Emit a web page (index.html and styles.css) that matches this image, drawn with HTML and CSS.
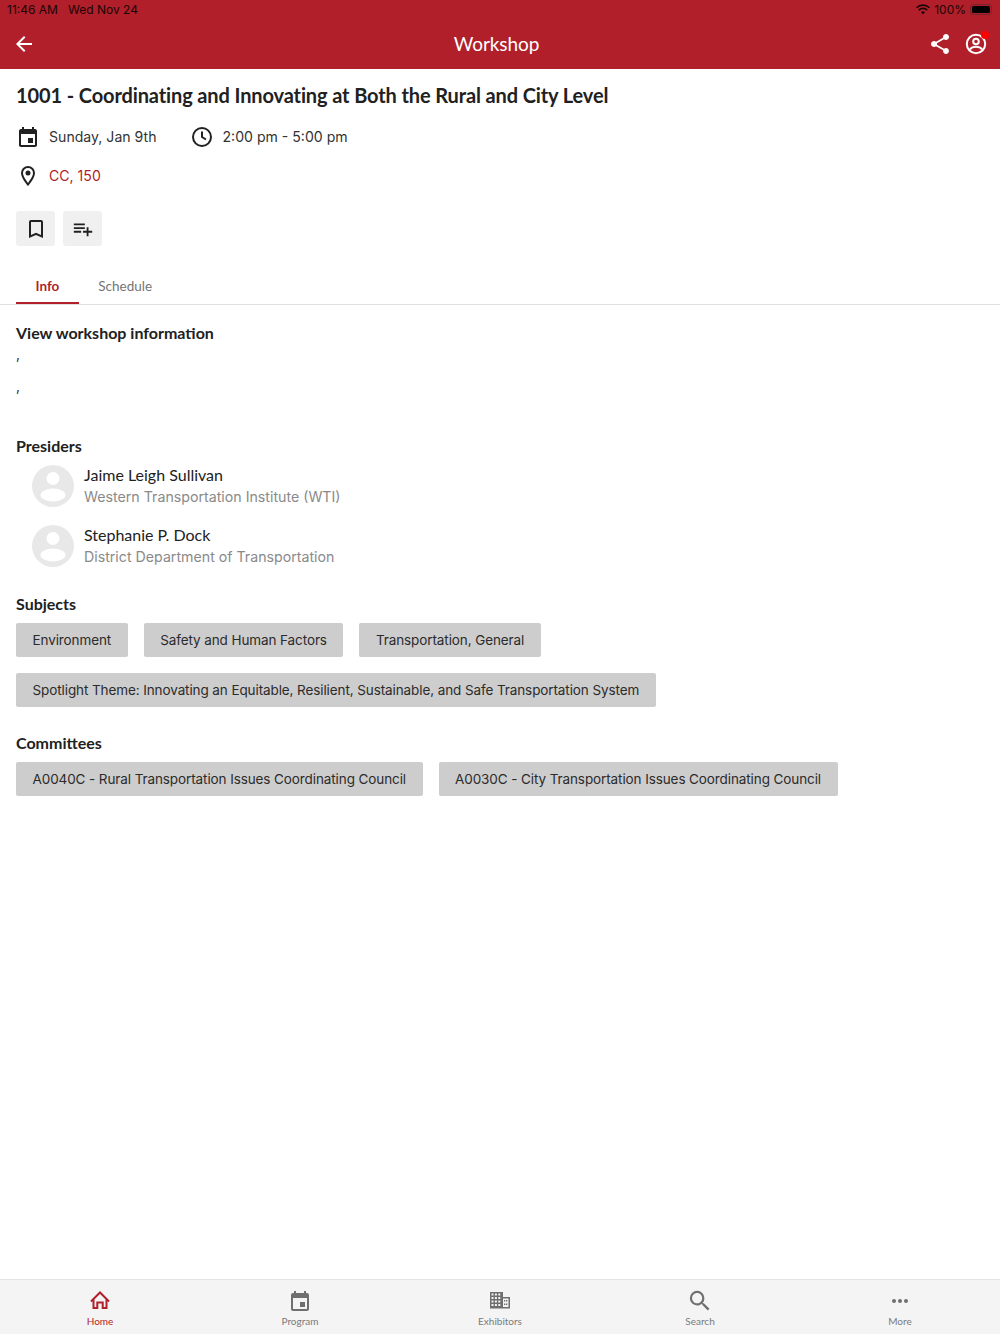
FILE: index.html
```html
<!DOCTYPE html>
<html lang="en">
<head>
<meta charset="utf-8">
<title>Workshop</title>
<link rel="stylesheet" href="styles.css">
</head>
<body>
<div class="app">
  <header class="topbar">
    <div class="status">
      <span class="status-time">11:46 AM&nbsp;&nbsp; Wed Nov 24</span>
      <span class="status-right">
        <svg class="wifi" width="14" height="11" viewBox="0 0 16 12"><path d="M8 11.5 5.7 9.1a3.3 3.3 0 0 1 4.6 0zM3.9 7.4 2.6 6a7.7 7.7 0 0 1 10.8 0l-1.3 1.4a5.8 5.8 0 0 0-8.200 0zM1.300 4.700 0 3.300a11.400 11.400 0 0 1 16 0l-1.300 1.400a9.500 9.500 0 0 0-13.400 0z" fill="#1a0505"/></svg>
        <span>100%</span>
        <span class="battery"><span class="battery-fill"></span></span>
      </span>
    </div>
    <div class="navrow">
      <svg class="back" width="24" height="24" viewBox="0 0 24 24"><path d="M20 11H7.830l5.590-5.590L12 4l-8 8 8 8 1.410-1.410L7.830 13H20z" fill="#fff"/></svg>
      <div class="navtitle">Workshop</div>
      <div class="navactions">
        <svg width="24" height="24" viewBox="0 0 24 24"><path d="M18 16.080c-.76 0-1.440.3-1.960.77L8.910 12.700c.05-.23.090-.46.090-.7s-.04-.47-.09-.7l7.050-4.110c.54.500 1.250.810 2.040.810 1.660 0 3-1.340 3-3s-1.340-3-3-3-3 1.340-3 3c0 .24.040.47.090.7L8.040 9.810C7.500 9.310 6.790 9 6 9c-1.660 0-3 1.340-3 3s1.340 3 3 3c.79 0 1.500-.31 2.040-.81l7.120 4.160c-.05.210-.08.430-.08.650 0 1.610 1.310 2.920 2.920 2.920s2.920-1.310 2.920-2.920-1.310-2.920-2.920-2.920z" fill="#fff"/></svg>
        <span class="account">
          <svg width="24" height="24" viewBox="0 0 24 24" fill="none" stroke="#fff" stroke-width="2"><circle cx="12" cy="12" r="9.200"/><circle cx="12" cy="9.500" r="2.800"/><path d="M5.800 17.500c1.500-2 3.800-2.800 6.200-2.800s4.700.8 6.200 2.800"/></svg>
          <span class="dot"></span>
        </span>
      </div>
    </div>
  </header>

  <main class="content">
    <div class="summary">
      <h1 class="title">1001 - Coordinating and Innovating at Both the Rural and City Level</h1>
      <div class="meta">
        <span class="meta-item">
          <svg class="meta-icon" width="24" height="24" viewBox="0 0 24 24"><path d="M17 13h-5v5h5v-5zM16 2v2H8V2H6v2H5c-1.110 0-1.990.9-1.990 2L3 20c0 1.100.89 2 2 2h14c1.100 0 2-.9 2-2V6c0-1.100-.9-2-2-2h-1V2h-2zm3 18H5V9h14v11z" fill="#212121"/></svg>
          Sunday, Jan 9th
        </span>
        <span class="meta-item">
          <svg class="meta-icon" width="24" height="24" viewBox="0 0 24 24" fill="none" stroke="#212121" stroke-width="2"><circle cx="12" cy="12" r="9"/><path d="M12 6.500V12l4 2.500"/></svg>
          2:00 pm - 5:00 pm
        </span>
      </div>
      <div class="meta">
        <a class="meta-item location">
          <svg class="meta-icon" width="24" height="24" viewBox="0 0 24 24"><path d="M12 2a7 7 0 0 0-7 7c0 5.250 7 13 7 13s7-7.750 7-13a7 7 0 0 0-7-7zM7 9a5 5 0 0 1 10 0c0 2.880-2.880 7.190-5 9.880C9.920 16.210 7 11.850 7 9z" fill="#212121"/><circle cx="12" cy="9" r="2.500" fill="#212121"/></svg>
          CC, 150
        </a>
      </div>
      <div class="actions">
        <button class="action" aria-label="Bookmark">
          <svg width="24" height="24" viewBox="0 0 24 24"><path d="M17 3H7c-1.100 0-2 .9-2 2v16l7-3 7 3V5c0-1.100-.9-2-2-2zm0 15-5-2.180L7 18V5h10v13z" fill="#212121"/></svg>
        </button>
        <button class="action" aria-label="Add to list">
          <svg width="22" height="22" viewBox="0 0 24 24"><path d="M14 10H2v2h12v-2zm0-4H2v2h12V6zm4 8v-4h-2v4h-4v2h4v4h2v-4h4v-2h-4zM2 16h8v-2H2v2z" fill="#212121"/></svg>
        </button>
      </div>
    </div>

    <nav class="tabs">
      <span class="tab tab-active">Info</span>
      <span class="tab">Schedule</span>
    </nav>

    <section class="details">
      <h2 class="section-title">View workshop information</h2>
      <p class="comma">,</p>
      <p class="comma">,</p>

      <h2 class="section-title presiders-title">Presiders</h2>
      <div class="person">
        <svg class="avatar" width="42" height="42" viewBox="0 0 42 42"><circle cx="21" cy="21" r="21" fill="#e8e8e8"/><circle cx="21" cy="13.500" r="6.500" fill="#fff"/><ellipse cx="21" cy="30" rx="12.500" ry="6.500" fill="#fff"/></svg>
        <div class="person-text">
          <div class="person-name">Jaime Leigh Sullivan</div>
          <div class="person-org">Western Transportation Institute (WTI)</div>
        </div>
      </div>
      <div class="person">
        <svg class="avatar" width="42" height="42" viewBox="0 0 42 42"><circle cx="21" cy="21" r="21" fill="#e8e8e8"/><circle cx="21" cy="13.500" r="6.500" fill="#fff"/><ellipse cx="21" cy="30" rx="12.500" ry="6.500" fill="#fff"/></svg>
        <div class="person-text">
          <div class="person-name">Stephanie P. Dock</div>
          <div class="person-org">District Department of Transportation</div>
        </div>
      </div>

      <h2 class="section-title subjects-title">Subjects</h2>
      <div class="chips">
        <span class="chip">Environment</span>
        <span class="chip">Safety and Human Factors</span>
        <span class="chip">Transportation, General</span>
        <span class="chip">Spotlight Theme: Innovating an Equitable, Resilient, Sustainable, and Safe Transportation System</span>
      </div>

      <h2 class="section-title committees-title">Committees</h2>
      <div class="chips">
        <span class="chip">A0040C - Rural Transportation Issues Coordinating Council</span>
        <span class="chip">A0030C - City Transportation Issues Coordinating Council</span>
      </div>
    </section>
  </main>

  <footer class="bottomnav">
    <div class="navitem navitem-active">
      <svg width="24" height="24" viewBox="0 0 24 24" fill="none" stroke="#b01f2a" stroke-width="2"><path d="M3 12.500 12 3.500l9 9"/><path d="M5.500 10.500V19h3.800v-5.500h5.400V19h3.800V10.500"/></svg>
      <span>Home</span>
    </div>
    <div class="navitem">
      <svg width="24" height="24" viewBox="0 0 24 24"><path d="M17 13h-5v5h5v-5zM16 2v2H8V2H6v2H5c-1.110 0-1.990.9-1.990 2L3 20c0 1.100.89 2 2 2h14c1.100 0 2-.9 2-2V6c0-1.100-.9-2-2-2h-1V2h-2zm3 18H5V9h14v11z" fill="#6f6f6f"/></svg>
      <span>Program</span>
    </div>
    <div class="navitem">
      <svg width="24" height="24" viewBox="0 0 24 24"><path d="M2 3h13v5h7v11.500H2zM3.500 4.500v2h2v-2zm3.400 0v2h2v-2zm3.400 0v2h2v-2zM3.500 8v2h2V8zm3.400 0v2h2V8zm3.400 0v2h2V8zM3.500 11.500v2h2v-2zm3.400 0v2h2v-2zm3.400 0v2h2v-2zM3.500 15v2h2v-2zm3.400 0v2h2v-2zm3.400 0v2h2v-2zM15 9.500V18h5.500V9.500zM16 11h1.300v1.500H16zm2 0h1.300v1.500H18zM16 14.500h1.300V16H16zm2 0h1.300V16H18z" fill="#6f6f6f" fill-rule="evenodd"/></svg>
      <span>Exhibitors</span>
    </div>
    <div class="navitem">
      <svg width="24" height="24" viewBox="0 0 24 24"><path d="M15.500 14h-.79l-.28-.27A6.470 6.470 0 0 0 16 9.500 6.500 6.500 0 1 0 9.500 16c1.610 0 3.090-.59 4.230-1.570l.27.280v.79l5 4.990L20.490 19l-4.990-5zm-6 0C7.010 14 5 11.990 5 9.500S7.010 5 9.500 5 14 7.010 14 9.500 11.990 14 9.500 14z" fill="#6f6f6f" transform="translate(-1.500 -1.500) scale(1.120)"/></svg>
      <span>Search</span>
    </div>
    <div class="navitem">
      <svg width="24" height="24" viewBox="0 0 24 24" fill="#6f6f6f"><circle cx="6" cy="12" r="2"/><circle cx="12" cy="12" r="2"/><circle cx="18" cy="12" r="2"/></svg>
      <span>More</span>
    </div>
  </footer>
</div>
</body>
</html>
```

FILE: styles.css
```css
* { box-sizing: border-box; }
html, body { margin: 0; padding: 0; }
body {
  width: 1000px;
  height: 1334px;
  overflow: hidden;
  background: #fff;
  color: #212121;
  font-family: Inter, "Liberation Sans", sans-serif;
}
.app { display: flex; flex-direction: column; height: 1334px; }

.topbar { background: #b01f2a; height: 68.5px; flex: none; }
.status {
  height: 19px;
  padding: 0 8px 0 7px;
  display: flex;
  justify-content: space-between;
  align-items: center;
  font-family: Inter, "Liberation Sans", sans-serif;
  font-size: 12px;
  color: #1a0505;
}
.status-right { display: flex; align-items: center; gap: 4px; }
.wifi { display: block; }
.battery {
  width: 22px; height: 11px;
  border: 1px solid #7a2229;
  border-radius: 3px;
  padding: 1px;
  display: block;
}
.battery-fill { display: block; height: 100%; background: #000; border-radius: 1.500px; }

.navrow {
  height: 49px;
  padding: 0 12px;
  display: flex;
  align-items: center;
  justify-content: space-between;
  position: relative;
}
.navtitle {
  position: absolute;
  left: 0; right: 7px;
  top: 0;
  line-height: 49px;
  text-align: center;
  font-family: Lato, sans-serif;
  font-size: 19px;
  letter-spacing: -0.1px;
  color: #fff;
}
.navactions { display: flex; gap: 12px; }
.navactions svg { display: block; }
.account { position: relative; display: block; }
.dot {
  position: absolute;
  top: -1px; right: -1px;
  width: 8px; height: 8px;
  border-radius: 50%;
  background: #f00;
}

.content { flex: 1; min-height: 0; }
.summary { padding: 0 16px; }
.title {
  margin: 13px 0 0;
  font-family: Lato, sans-serif;
  font-size: 20px;
  line-height: 27px;
  letter-spacing: -0.12px;
  font-weight: 700;
  color: #212121;
}
.meta { display: flex; gap: 33px; height: 24px; margin-top: 15px; align-items: center; }
.title + .meta { margin-top: 16px; }
.meta-item {
  display: flex;
  align-items: center;
  gap: 9px;
  font-size: 14.100px;
  color: #333;
}
.location { color: #b01f2a; }
.actions { display: flex; gap: 8px; margin-top: 23px; }
.action {
  width: 39px; height: 35px;
  padding: 2px 0 0;
  border: 0;
  border-radius: 3px;
  background: #f0f0f0;
  display: flex;
  align-items: center;
  justify-content: center;
}

.tabs {
  margin-top: 22px;
  padding: 0 16px;
  height: 37px;
  border-bottom: 1px solid #e0e0e0;
  display: flex;
}
.tab {
  padding: 0 19.500px;
  font-family: Lato, sans-serif;
  font-size: 13.500px;
  line-height: 36px;
  color: #757575;
  height: 36px;
}
.tab-active {
  color: #b01f2a;
  font-weight: 700;
  border-bottom: 2px solid #b01f2a;
}

.details { padding: 0 16px; }
.section-title {
  margin: 0;
  font-family: Lato, sans-serif;
  font-size: 16px;
  line-height: 22px;
  font-weight: 700;
  color: #212121;
}
.details > .section-title:first-child { margin-top: 17px; }
.comma { margin: 0; height: 32px; font-size: 14px; line-height: 20px; color: #333; }
.presiders-title { margin-top: 27px; margin-bottom: 8px; }
.person { display: flex; gap: 10px; padding-left: 16px; height: 42px; margin-bottom: 18px; align-items: center; }
.avatar { display: block; flex: none; }
.person-name { font-family: Lato, sans-serif; font-size: 16px; line-height: 22px; color: #212121; }
.person-org { font-size: 14.200px; line-height: 22px; color: #8a8a8a; }
.subjects-title { margin-top: 26px; margin-bottom: 8px; }
.committees-title { margin-top: 25px; margin-bottom: 8px; }
.chips { display: flex; flex-wrap: wrap; gap: 16px; }
.chip {
  height: 34px;
  padding: 0 16.500px;
  border-radius: 2px;
  background: #cdcdcd;
  font-size: 13.500px;
  letter-spacing: -0.1px;
  line-height: 34px;
  color: #2b2b2b;
}

.bottomnav {
  flex: none;
  height: 55px;
  background: #f4f4f4;
  border-top: 1px solid #e4e4e4;
  display: grid;
  grid-template-columns: repeat(5, 1fr);
}
.navitem {
  display: flex;
  flex-direction: column;
  align-items: center;
  padding-top: 9px;
  font-family: Lato, sans-serif;
  font-size: 10px;
  line-height: 14px;
  color: #7a7a7a;
}
.navitem svg { display: block; }
.navitem span { margin-top: 1px; }
.navitem-active { color: #b01f2a; }
```
